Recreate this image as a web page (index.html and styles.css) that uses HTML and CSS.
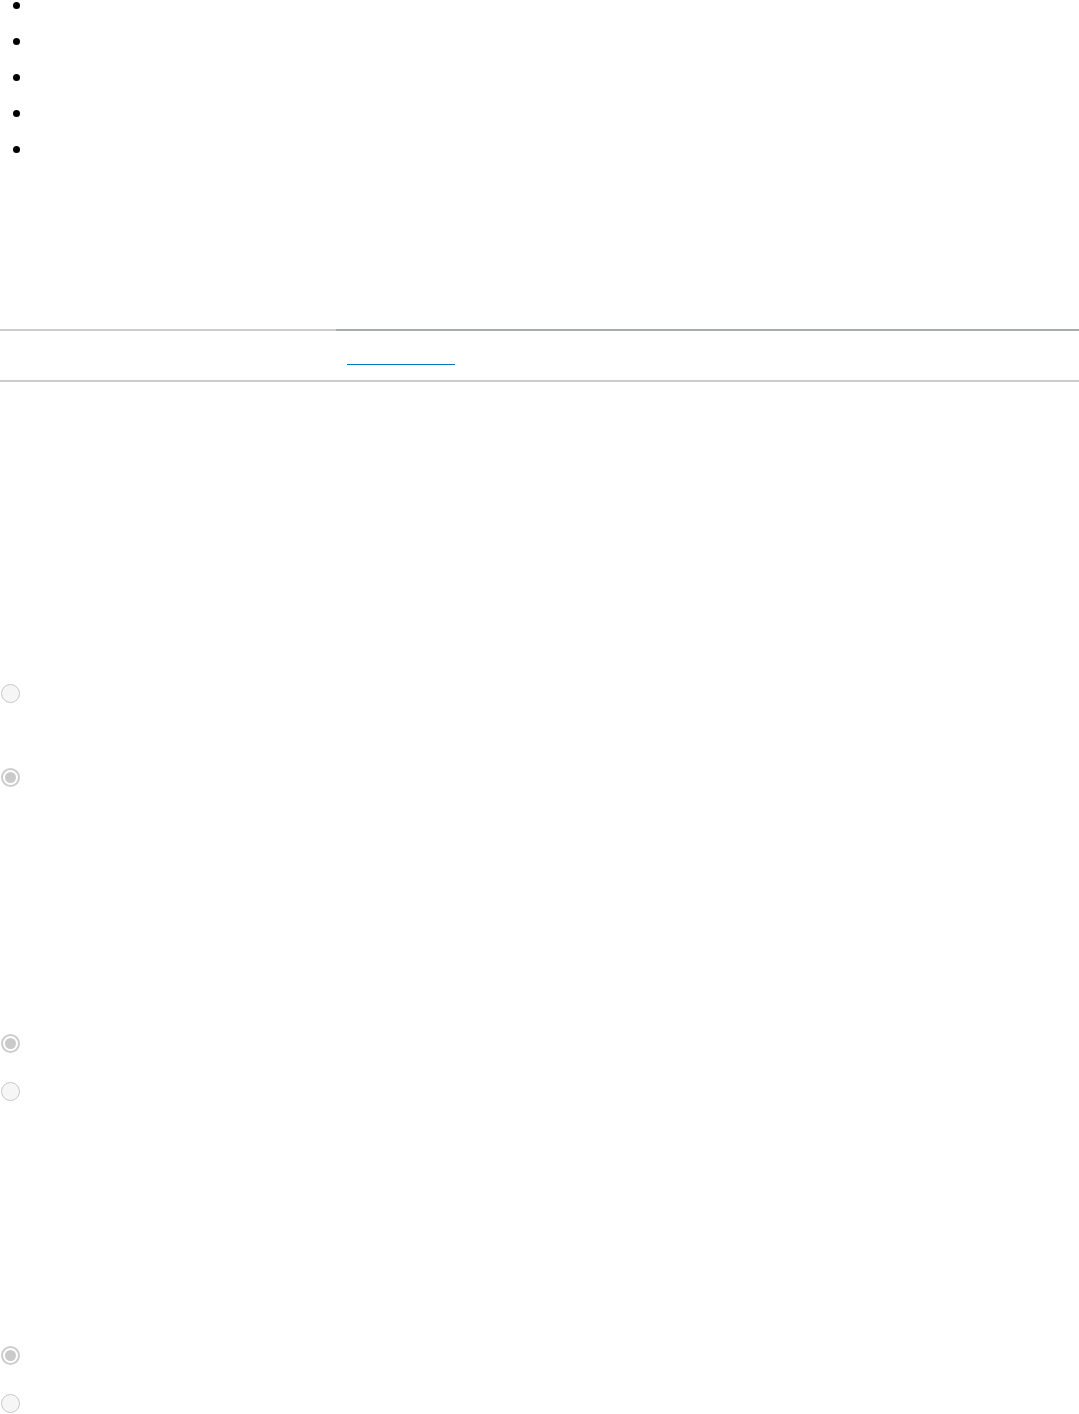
FILE: index.html
```
<!DOCTYPE html>
<html lang="en">
<head>
<meta charset="utf-8">
<title>Page</title>
<link rel="stylesheet" href="styles.css">
</head>
<body>
<ul class="bullets">
  <li></li>
  <li></li>
  <li></li>
  <li></li>
  <li></li>
</ul>
<div class="tabs">
  <div class="tab tab-first"></div>
  <div class="tab tab-rest"><a class="tab-link" href="#" aria-label="link"></a></div>
</div>
<div class="group group-1">
  <span class="radio"></span>
  <span class="radio radio-on"></span>
</div>
<div class="group group-2">
  <span class="radio radio-on"></span>
  <span class="radio"></span>
</div>
<div class="group group-3">
  <span class="radio radio-on"></span>
  <span class="radio"></span>
</div>
</body>
</html>
```
FILE: styles.css
```
html, body {
  margin: 0;
  padding: 0;
  background: #ffffff;
  font-family: "Liberation Sans", Arial, sans-serif;
}
body {
  width: 1079px;
  overflow: hidden;
}
.bullets {
  list-style: none;
  margin: -13px 0 0 0;
  padding: 0;
}
.bullets li {
  height: 36px;
  display: flex;
  align-items: center;
  padding-left: 13px;
}
.bullets li::before {
  content: "";
  width: 7px;
  height: 7px;
  border-radius: 50%;
  background: #000000;
}
.tabs {
  display: flex;
  margin-top: 162px;
  border-bottom: 2px solid #caccd0;
}
.tab {
  height: 49px;
}
.tab-first {
  width: 336px;
  border-top: 2px solid #caccd0;
}
.tab-rest {
  flex: 1;
  border-top: 2px solid #a6abb2;
}
.tab-link {
  display: block;
  width: 108px;
  height: 33px;
  margin-left: 11px;
  border-bottom: 1px solid #0077c0;
}
.group {
  display: flex;
  flex-direction: column;
  align-items: flex-start;
  padding-left: 1px;
}
.group-1 {
  margin-top: 302px;
  gap: 65px;
}
.group-2 {
  margin-top: 247px;
  gap: 29px;
}
.group-3 {
  margin-top: 245px;
  gap: 29px;
}
.radio {
  box-sizing: border-box;
  width: 19px;
  height: 19px;
  border-radius: 50%;
  border: 1px solid #c8c8c8;
  background: #f6f6f6;
  display: flex;
  align-items: center;
  justify-content: center;
}
.radio-on {
  border: 2px solid #cdcdcd;
  background: #ffffff;
}
.radio-on::after {
  content: "";
  width: 11px;
  height: 11px;
  border-radius: 50%;
  background: #cacaca;
}
```
